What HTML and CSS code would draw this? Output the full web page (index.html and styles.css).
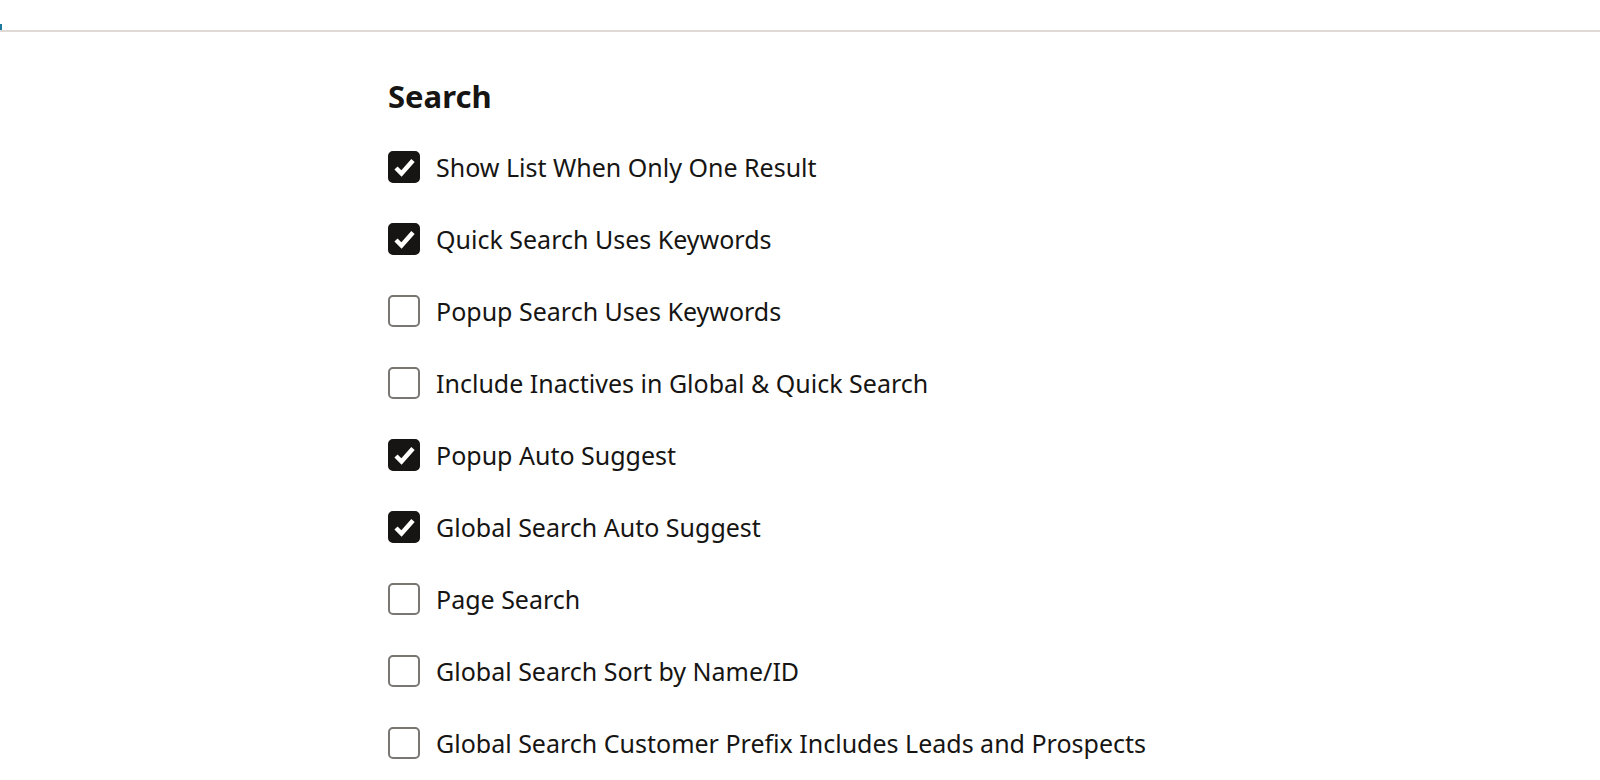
FILE: index.html
```html
<!DOCTYPE html>
<html lang="en">
  <head>
    <meta charset="UTF-8" />
    <meta name="viewport" content="width=device-width, initial-scale=1.0" />
    <title>Search Preferences</title>
    <link rel="stylesheet" href="styles.css">
  </head>
  <body>
    <div class="top-bar">
      <span class="progress"></span>
    </div>

    <div class="prefs">
      <h2>Search</h2>

      <div class="options">
        <label class="option">
          <span class="box checked">
            <svg viewBox="2 2 28 28"><path d="M8 17l5.5 5.5L25 9.5"/></svg>
          </span>
          Show List When Only One Result
        </label>
        <label class="option">
          <span class="box checked">
            <svg viewBox="2 2 28 28"><path d="M8 17l5.5 5.5L25 9.5"/></svg>
          </span>
          Quick Search Uses Keywords
        </label>
        <label class="option">
          <span class="box"></span>
          Popup Search Uses Keywords
        </label>
        <label class="option">
          <span class="box"></span>
          Include Inactives in Global &amp; Quick Search
        </label>
        <label class="option">
          <span class="box checked">
            <svg viewBox="2 2 28 28"><path d="M8 17l5.5 5.5L25 9.5"/></svg>
          </span>
          Popup Auto Suggest
        </label>
        <label class="option">
          <span class="box checked">
            <svg viewBox="2 2 28 28"><path d="M8 17l5.5 5.5L25 9.5"/></svg>
          </span>
          Global Search Auto Suggest
        </label>
        <label class="option">
          <span class="box"></span>
          Page Search
        </label>
        <label class="option">
          <span class="box"></span>
          Global Search Sort by Name/ID
        </label>
        <label class="option">
          <span class="box"></span>
          Global Search Customer Prefix Includes Leads and Prospects
        </label>
      </div>
    </div>
  </body>
</html>
```

FILE: styles.css
```css
body {
  font-family: "Noto Sans", Arial, sans-serif;
  color: #161513;
  background-color: #fff;
  margin: 0;
  padding: 0;
}

.top-bar {
  position: relative;
  height: 30px;
  border-bottom: 2px solid #dfdad6;
}

.progress {
  position: absolute;
  left: 0;
  bottom: 0;
  width: 2px;
  height: 6px;
  background-color: #1b7a9b;
}

.prefs {
  padding-left: 388px;
}

.prefs h2 {
  margin: 0;
  padding-top: 44px;
  font-size: 31px;
  font-weight: 700;
  line-height: 40px;
}

.options {
  display: flex;
  flex-direction: column;
  margin-top: 15px;
}

.option {
  display: flex;
  align-items: center;
  gap: 16px;
  height: 72px;
  font-size: 25px;
  cursor: pointer;
}

.box {
  display: flex;
  width: 32px;
  height: 32px;
  box-sizing: border-box;
  border: 2px solid #7a7672;
  border-radius: 5px;
  flex-shrink: 0;
}

.box.checked {
  background-color: #161513;
  border-color: #161513;
}

.box svg {
  width: 28px;
  height: 28px;
  flex-shrink: 0;
  fill: none;
  stroke: #fff;
  stroke-width: 4.5;
  stroke-linecap: butt;
  stroke-linejoin: miter;
}
```
